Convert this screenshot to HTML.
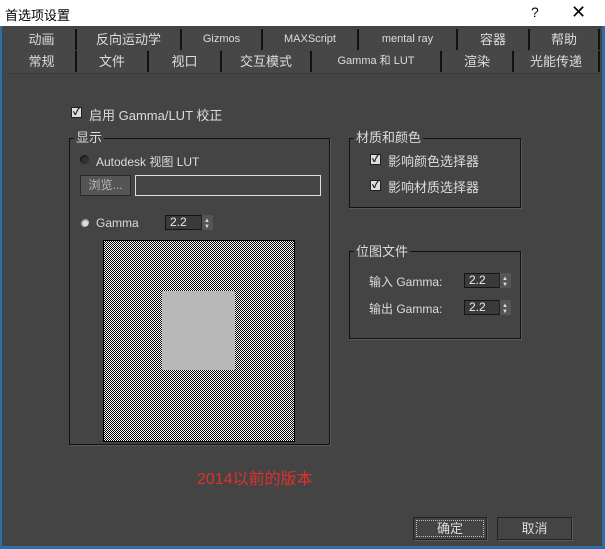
<!DOCTYPE html>
<html><head><meta charset="utf-8"><style>
*{box-sizing:border-box;margin:0;padding:0}
body{width:605px;height:549px;background:#444;position:relative;overflow:hidden;font-family:"Liberation Sans","Noto Sans CJK SC",sans-serif;color:#dcdcdc;font-size:12px}
.a{position:absolute}
.title{left:0;top:0;width:605px;height:26px;background:#fff;color:#000;font-size:13px}
.bl{background:#2b6ea8}
.tab{position:absolute;height:21px;line-height:21px;text-align:center;font-size:13px;color:#ddd;border-right:2px solid #111;background:#474747}
.grp{border:1px solid #111;box-shadow:1px 1px 0 #5a5a5a}
.lg{background:#444;padding:0 2px;font-size:13px;line-height:14px}
.cb{width:11px;height:11px;background:#ddd;border:1px solid #222;font-size:10px;line-height:9px;text-align:center;color:#111;font-weight:bold}
.sp{width:34px;height:15px;background:#3a3a3a;border:1px solid #151515;font-size:12px;line-height:13px;padding-left:4px;color:#eee}
.sp:after{content:"";position:absolute;right:-1px;top:-1px;width:11px;height:15px;background:#555;border-left:1px solid #222}
.arr{position:absolute;right:2px;font-size:6px;color:#ddd;z-index:2;line-height:6px}
.rad{width:9px;height:9px;border-radius:50%;background:#333;box-shadow:inset 1px 1px 2px #111}
</style></head><body>
<div class="a title"><span class="a" style="left:5px;top:5px">首选项设置</span><span class="a" style="left:531px;top:4px;font-size:14px">?</span><span class="a" style="left:571px;top:2px;font-size:18px">✕</span></div>
<div class="a bl" style="left:0;top:26px;width:2px;height:523px"></div>
<div class="a bl" style="left:602px;top:26px;width:3px;height:523px"></div>
<div class="a bl" style="left:0;top:546px;width:605px;height:3px"></div>
<div class="a" style="left:8px;top:29px;width:593px;height:44px">
<div class="tab" style="left:0;top:0;width:69px">动画</div>
<div class="tab" style="left:69px;top:0;width:105px">反向运动学</div>
<div class="tab" style="left:174px;top:0;width:81px;font-size:11px">Gizmos</div>
<div class="tab" style="left:255px;top:0;width:96px;font-size:11px">MAXScript</div>
<div class="tab" style="left:351px;top:0;width:99px;font-size:11px">mental ray</div>
<div class="tab" style="left:450px;top:0;width:72px">容器</div>
<div class="tab" style="left:522px;top:0;width:70px">帮助</div>
<div class="tab" style="left:0;top:22px;width:69px">常规</div>
<div class="tab" style="left:69px;top:22px;width:72px">文件</div>
<div class="tab" style="left:141px;top:22px;width:73px">视口</div>
<div class="tab" style="left:214px;top:22px;width:90px">交互模式</div>
<div class="tab" style="left:304px;top:22px;width:130px;font-size:11px">Gamma 和 LUT</div>
<div class="tab" style="left:434px;top:22px;width:72px">渲染</div>
<div class="tab" style="left:506px;top:22px;width:86px">光能传递</div>
</div>
<div class="a" style="left:7px;top:73px;width:593px;height:1px;background:#3a3a3a"></div>

<div class="a cb" style="left:71px;top:107px">✓</div>
<div class="a" style="left:89px;top:105px;font-size:13px">启用 Gamma/LUT 校正</div>

<div class="a grp" style="left:69px;top:138px;width:261px;height:307px"></div>
<div class="a lg" style="left:74px;top:131px">显示</div>
<div class="a rad" style="left:80px;top:155px"></div>
<div class="a" style="left:96px;top:153px">Autodesk 视图 LUT</div>
<div class="a" style="left:80px;top:175px;width:51px;height:21px;background:#555;border:1px solid #2a2a2a;line-height:19px;text-align:center;color:#bbb">浏览...</div>
<div class="a" style="left:135px;top:175px;width:186px;height:21px;border:1px solid #ddd;background:#444"></div>
<div class="a rad" style="left:80px;top:218px;background:#ddd"></div>
<div class="a" style="left:96px;top:216px">Gamma</div>
<div class="a sp" style="left:165px;top:215px;width:48px">2.2<span class="arr" style="top:2px">▲</span><span class="arr" style="top:8px">▼</span></div>
<div class="a" style="left:103px;top:240px;width:192px;height:202px;border:1px solid #000;background-color:#808080;background-image:repeating-conic-gradient(#000 0 25%,#fff 0 50%);background-size:2px 2px"></div>
<div class="a" style="left:162px;top:291px;width:73px;height:79px;background:#b8b8b8"></div>

<div class="a grp" style="left:349px;top:138px;width:172px;height:70px"></div>
<div class="a lg" style="left:354px;top:131px">材质和颜色</div>
<div class="a cb" style="left:370px;top:154px">✓</div>
<div class="a" style="left:388px;top:151px;font-size:13px">影响颜色选择器</div>
<div class="a cb" style="left:370px;top:180px">✓</div>
<div class="a" style="left:388px;top:177px;font-size:13px">影响材质选择器</div>

<div class="a grp" style="left:349px;top:251px;width:172px;height:88px"></div>
<div class="a lg" style="left:354px;top:245px">位图文件</div>
<div class="a" style="left:369px;top:273px">输入 Gamma:</div>
<div class="a sp" style="left:464px;top:273px;width:47px">2.2<span class="arr" style="top:2px">▲</span><span class="arr" style="top:8px">▼</span></div>
<div class="a" style="left:369px;top:300px">输出 Gamma:</div>
<div class="a sp" style="left:464px;top:300px;width:47px">2.2<span class="arr" style="top:2px">▲</span><span class="arr" style="top:8px">▼</span></div>

<div class="a" style="left:197px;top:465px;color:#e0302a;font-size:16px">2014以前的版本</div>

<div class="a" style="left:413px;top:517px;width:74px;height:23px;border:1px solid #222;box-shadow:1px 1px 0 #5a5a5a"><div style="margin:2px;height:17px;border:1px dotted #bbb;text-align:center;line-height:15px;font-size:13px">确定</div></div>
<div class="a" style="left:497px;top:517px;width:75px;height:23px;border:1px solid #222;box-shadow:1px 1px 0 #5a5a5a;text-align:center;line-height:21px;font-size:13px">取消</div>
</body></html>
